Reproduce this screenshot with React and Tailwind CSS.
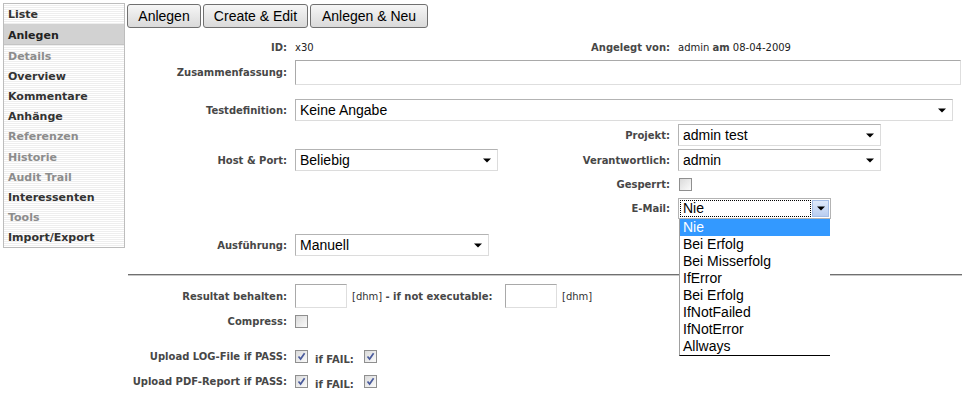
import React from "react";

const V = { fontFamily: '"DejaVu Sans", Verdana, sans-serif' };
const A = { fontFamily: '"Liberation Sans", Arial, sans-serif' };

const sideItems = [
  ["Liste", true],
  ["Anlegen", true, true],
  ["Details", false],
  ["Overview", true],
  ["Kommentare", true],
  ["Anhänge", true],
  ["Referenzen", false],
  ["Historie", false],
  ["Audit Trail", false],
  ["Interessenten", true],
  ["Tools", false],
  ["Import/Export", true],
];

function Sidebar() {
  return (
    <div
      className="w-[122px] h-[245px] shrink-0 border border-[#bdbdbd] bg-[repeating-linear-gradient(to_bottom,#ffffff_0px,#ffffff_1px,#eeeeee_1px,#eeeeee_2px)] flex flex-col"
      style={V}
    >
      {sideItems.map(([label, enabled, sel]) => (
        <div
          key={label}
          className={
            sel
              ? "flex-1 flex items-center pl-[4px] pt-[3px] text-[11px] font-bold text-[#222] bg-[#d2d2d2] border-b border-[#c4c4c4]"
              : enabled
              ? "flex-1 flex items-center pl-[4px] pt-[3px] text-[11px] font-bold text-[#333]"
              : "flex-1 flex items-center pl-[4px] pt-[3px] text-[11px] font-bold text-[#8c8c8c]"
          }
        >
          {label}
        </div>
      ))}
    </div>
  );
}

function Btn({ children, w }) {
  return (
    <div
      className={`h-[24px] ${w} flex items-center justify-center rounded-[3px] border border-[#707070] bg-gradient-to-b from-[#f6f6f6] to-[#dadada] text-[14px] text-black`}
      style={A}
    >
      {children}
    </div>
  );
}

function Arrow() {
  return (
    <svg width="8" height="5" viewBox="0 0 8 5" className="shrink-0">
      <path d="M0 0.5H8L4 4.5Z" fill="#000" />
    </svg>
  );
}

function Select({ w, value }) {
  return (
    <div
      className={`h-[22px] ${w} flex items-center justify-between pl-[4px] pr-[6px] border border-[#b3b3b3] border-b-[#dcdcdc] border-r-[#dcdcdc] bg-white text-[14px] text-black`}
      style={A}
    >
      <span>{value}</span>
      <Arrow />
    </div>
  );
}

function Checkbox({ checked }) {
  return (
    <div className="w-[13px] h-[13px] shrink-0 border border-[#8f8f8f] bg-gradient-to-br from-[#dadada] to-[#fbfbfb] flex items-center justify-center">
      {checked && (
        <svg width="9" height="9" viewBox="0 0 9 9">
          <path d="M1.5 4.5L3.6 7L7.6 1.3" stroke="#4a5b9c" strokeWidth="1.7" fill="none" />
        </svg>
      )}
    </div>
  );
}

function Label({ children, w = "w-[160px]" }) {
  return (
    <div className={`${w} shrink-0 text-right text-[10px] font-bold text-[#474747]`} style={V}>
      {children}
    </div>
  );
}

function Input({ w, h = "h-[24px]" }) {
  return (
    <div className={`${w} ${h} shrink-0 border border-[#a9a9a9] border-b-[#dedede] border-r-[#dedede] bg-white`} />
  );
}

const emailOptions = ["Nie", "Bei Erfolg", "Bei Misserfolg", "IfError", "Bei Erfolg", "IfNotFailed", "IfNotError", "Allways"];

function EmailSelect() {
  return (
    <div className="relative w-[153px] h-[21px]">
      <div className="w-full h-full border border-[#b3b3b3] bg-white flex items-center p-[1px] gap-[1px]" style={A}>
        <div className="flex-1 h-full border border-dotted border-black flex items-center pl-[2px] text-[14px] text-black">
          Nie
        </div>
        <div className="w-[17px] h-full border border-[#a4bde6] bg-gradient-to-b from-[#dfeafb] to-[#b9cdf0] flex items-center justify-center">
          <Arrow />
        </div>
      </div>
      <div
        className="absolute left-[1px] top-[21px] w-[151px] z-10 bg-white border-l border-l-[#a0a0a0] border-b border-b-black flex flex-col text-[14px] text-black"
        style={A}
      >
        {emailOptions.map((o, i) => (
          <div
            key={i}
            className={
              i === 0
                ? "h-[17px] flex items-center pl-[3px] bg-[#3399ff] text-white"
                : "h-[17px] flex items-center pl-[3px]"
            }
          >
            {o}
          </div>
        ))}
      </div>
    </div>
  );
}

function UploadRow({ label, top }) {
  return (
    <div className={`${top} h-[18px] flex items-center`}>
      <Label>{label}</Label>
      <div className="ml-[8px] flex items-center">
        <Checkbox checked />
        <span className="ml-[7px] mt-[6px] w-[49px] text-[10px] font-bold text-[#474747]" style={V}>
          if FAIL:
        </span>
        <Checkbox checked />
      </div>
    </div>
  );
}

export default function App() {
  return (
    <div className="w-[967px] h-[398px] overflow-hidden bg-white flex pt-[3px] pl-[3px]">
      <Sidebar />
      <div className="ml-[2px] w-[836px] flex flex-col">
        <div className="mt-[1px] flex gap-[2px]">
          <Btn w="w-[74px]">Anlegen</Btn>
          <Btn w="w-[105px]">Create &amp; Edit</Btn>
          <Btn w="w-[118px]">Anlegen &amp; Neu</Btn>
        </div>

        {/* ID row */}
        <div className="mt-[10px] h-[18px] flex items-center">
          <div className="w-[448px] flex items-center">
            <Label>ID:</Label>
            <span className="ml-[8px] text-[10px] text-[#222]" style={V}>x30</span>
          </div>
          <Label w="w-[95px]">Angelegt von:</Label>
          <span className="ml-[8px] text-[10px] text-[#222]" style={V}>
            admin <b className="text-[#444]">am</b> 08-04-2009
          </span>
        </div>

        {/* Zusammenfassung */}
        <div className="mt-[4px] h-[24px] flex items-center">
          <Label>Zusammenfassung:</Label>
          <div className="ml-[8px]">
            <Input w="w-[666px]" h="h-[25px]" />
          </div>
        </div>

        {/* Testdefinition */}
        <div className="mt-[15px] h-[22px] flex items-center">
          <Label>Testdefinition:</Label>
          <div className="ml-[8px]">
            <Select w="w-[658px]" value="Keine Angabe" />
          </div>
        </div>

        {/* Projekt */}
        <div className="mt-[3px] h-[22px] flex items-center">
          <div className="w-[448px]" />
          <Label w="w-[95px]">Projekt:</Label>
          <div className="ml-[8px]">
            <Select w="w-[203px]" value="admin test" />
          </div>
        </div>

        {/* Host & Port / Verantwortlich */}
        <div className="mt-[3px] h-[22px] flex items-center">
          <div className="w-[448px] flex items-center">
            <Label>Host &amp; Port:</Label>
            <div className="ml-[8px]">
              <Select w="w-[203px]" value="Beliebig" />
            </div>
          </div>
          <Label w="w-[95px]">Verantwortlich:</Label>
          <div className="ml-[8px]">
            <Select w="w-[203px]" value="admin" />
          </div>
        </div>

        {/* Gesperrt */}
        <div className="mt-[3px] h-[20px] flex items-center">
          <div className="w-[448px]" />
          <Label w="w-[95px]">Gesperrt:</Label>
          <div className="ml-[9px]">
            <Checkbox />
          </div>
        </div>

        {/* E-Mail */}
        <div className="mt-[4px] h-[21px] flex items-center">
          <div className="w-[448px]" />
          <Label w="w-[95px]">E-Mail:</Label>
          <div className="ml-[8px]">
            <EmailSelect />
          </div>
        </div>

        {/* Ausführung */}
        <div className="mt-[15px] h-[22px] flex items-center">
          <Label>Ausführung:</Label>
          <div className="ml-[8px]">
            <Select w="w-[194px]" value="Manuell" />
          </div>
        </div>

        {/* HR */}
        <div className="mt-[18px] ml-[1px] w-[834px] h-[2px] border-t border-t-[#707070] border-b border-b-[#c8c8c8]" />

        {/* Resultat behalten */}
        <div className="mt-[8px] h-[24px] flex items-center">
          <Label>Resultat behalten:</Label>
          <div className="ml-[8px] flex items-center">
            <Input w="w-[52px]" />
            <span className="ml-[5px] w-[153px] text-[10px] text-[#333]" style={V}>
              [dhm] <b className="text-[#474747]">- if not executable:</b>
            </span>
            <Input w="w-[52px]" />
            <span className="ml-[5px] text-[10px] text-[#333]" style={V}>[dhm]</span>
          </div>
        </div>

        {/* Compress */}
        <div className="mt-[4px] h-[18px] flex items-center">
          <Label>Compress:</Label>
          <div className="ml-[8px]">
            <Checkbox />
          </div>
        </div>

        <UploadRow label="Upload LOG-File if PASS:" top="mt-[17px]" />
        <UploadRow label="Upload PDF-Report if PASS:" top="mt-[7px]" />
      </div>
    </div>
  );
}
